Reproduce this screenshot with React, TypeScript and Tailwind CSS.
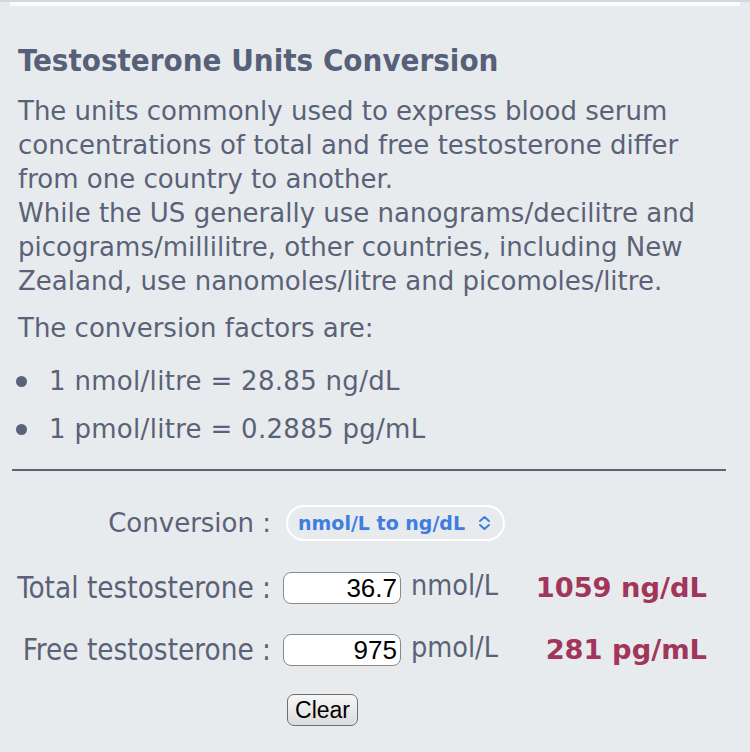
import React from "react";

export default function App() {
  const verdana = { fontFamily: '"DejaVu Sans", Verdana, sans-serif' };
  return (
    <div className="min-h-[752px] w-[750px] bg-[#e8ebed] text-[#5a6278]" style={verdana}>
      <div className="h-[2px] bg-[#d6d7d8]" />
      <div className="h-[4px] mx-[10px] bg-[#fafbfb]" />
      <div className="px-[12px] pt-[36px]">
        <div className="pl-[6px]">
          <h1
            className="text-[31px] leading-[36px] font-bold text-[#566079]"
            style={{ fontFamily: '"DejaVu Sans Condensed", "DejaVu Sans", sans-serif' }}
          >
            Testosterone Units Conversion
          </h1>
          <p className="mt-[16px] text-[26px] leading-[34px] pr-[2px]">
            The units commonly used to express blood serum concentrations of total and free
            testosterone differ from one country to another.
            <br />
            While the US generally use nanograms/decilitre and picograms/millilitre, other
            countries, including New Zealand, use nanomoles/litre and picomoles/litre.
          </p>
          <p className="mt-[13px] text-[26px] leading-[34px]">The conversion factors are:</p>
          <ul className="mt-[12px] text-[26px] leading-[48px] tracking-[0.3px]">
            <li className="flex items-center">
              <span className="w-[11px] h-[11px] rounded-full bg-[#5a6278] -ml-[2px] mr-[22px]" />
              1 nmol/litre = 28.85 ng/dL
            </li>
            <li className="flex items-center">
              <span className="w-[11px] h-[11px] rounded-full bg-[#5a6278] -ml-[2px] mr-[22px]" />
              1 pmol/litre = 0.2885 pg/mL
            </li>
          </ul>
        </div>
        <div className="mt-[16px] h-[2px] w-[714px] bg-[#5b6378]" />
      </div>

      <div className="mt-[34px] flex items-center h-[36px]">
        <div className="w-[271px] shrink-0 text-right text-[26px]">Conversion :</div>
        <div className="ml-[15px] w-[219px] h-[36px] rounded-full border-2 border-white flex items-center pl-[10px] pr-[12px] justify-between">
          <span className="text-[19px] font-bold text-[#3f7ddf]">nmol/L to ng/dL</span>
          <svg width="13" height="16" viewBox="0 0 13 16" fill="none" stroke="#3f7ddf" strokeWidth="2" strokeLinecap="round" strokeLinejoin="round">
            <path d="M2 6 L6.5 2 L11 6" />
            <path d="M2 10 L6.5 14 L11 10" />
          </svg>
        </div>
      </div>

      <Row label="Total testosterone :" value="36.7" unit="nmol/L" result="1059 ng/dL" mt="mt-[31px]" />
      <Row label="Free testosterone :" value="975" unit="pmol/L" result="281 pg/mL" mt="mt-[30px]" />

      <div className="mt-[28px] pl-[287px]">
        <button
          className="w-[71px] h-[32px] rounded-[7px] border-[1.5px] border-[#6f6f6f] bg-gradient-to-b from-[#f7f7f7] to-[#dcdcdc] text-[23px] leading-none text-black"
          style={{ fontFamily: '"Liberation Sans", Arial, sans-serif' }}
        >
          Clear
        </button>
      </div>
    </div>
  );
}

function Row({
  label,
  value,
  unit,
  result,
  mt,
}: {
  label: string;
  value: string;
  unit: string;
  result: string;
  mt: string;
}) {
  const cond = { fontFamily: '"DejaVu Sans Condensed", "DejaVu Sans", sans-serif' };
  const arial = { fontFamily: '"Liberation Sans", Arial, sans-serif' };
  return (
    <div className={`${mt} flex items-center h-[32px]`}>
      <div className="w-[271px] shrink-0 text-right text-[29.4px]" style={cond}>
        {label}
      </div>
      <div
        className="ml-[12px] w-[118px] h-[32px] shrink-0 rounded-[8px] border-[1.5px] border-[#8a8a8a] bg-white flex items-center justify-end pr-[3px] text-[26px] text-black"
        style={arial}
      >
        {value}
      </div>
      <div className="ml-[10px] text-[28.5px] -mt-[4px]" style={cond}>
        {unit}
      </div>
      <div className="flex-1 text-right pr-[43px] text-[27.3px] font-bold text-[#a2355a]">{result}</div>
    </div>
  );
}
